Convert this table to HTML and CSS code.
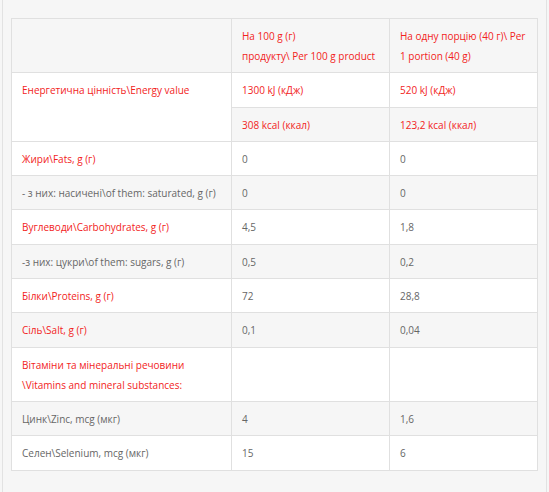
FILE: index.html
```html
<!DOCTYPE html>
<html lang="uk">
<head>
<meta charset="utf-8">
<title>Nutrition</title>
<link rel="stylesheet" href="styles.css">
</head>
<body>
<div class="panel">
  <table class="nutri">
    <colgroup>
      <col class="c1"><col class="c2"><col class="c3">
    </colgroup>
    <tr class="alt">
      <td></td>
      <td class="red">На 100 g (г)<br>продукту\ Per 100 g product</td>
      <td class="red">На одну порцію (40 г)\ Per 1 portion (40 g)</td>
    </tr>
    <tr>
      <td class="red first" rowspan="2">Енергетична цінність\Energy value</td>
      <td class="red">1300 kJ (кДж)</td>
      <td class="red">520 kJ (кДж)</td>
    </tr>
    <tr class="alt">
      <td class="red">308 kcal (ккал)</td>
      <td class="red">123,2 kcal (ккал)</td>
    </tr>
    <tr>
      <td class="red">Жири\Fats, g (г)</td><td>0</td><td>0</td>
    </tr>
    <tr class="alt">
      <td>- з них: насичені\of them: saturated, g (г)</td><td>0</td><td>0</td>
    </tr>
    <tr>
      <td class="red">Вуглеводи\Carbohydrates, g (г)</td><td>4,5</td><td>1,8</td>
    </tr>
    <tr class="alt">
      <td>-з них: цукри\of them: sugars, g (г)</td><td>0,5</td><td>0,2</td>
    </tr>
    <tr>
      <td class="red">Білки\Proteins, g (г)</td><td>72</td><td>28,8</td>
    </tr>
    <tr class="alt">
      <td class="red">Сіль\Salt, g (г)</td><td>0,1</td><td>0,04</td>
    </tr>
    <tr>
      <td class="red">Вітаміни та мінеральні речовини<br>\Vitamins and mineral substances:</td><td></td><td></td>
    </tr>
    <tr class="alt">
      <td>Цинк\Zinc, mcg (мкг)</td><td>4</td><td>1,6</td>
    </tr>
    <tr>
      <td>Селен\Selenium, mcg (мкг)</td><td>15</td><td>6</td>
    </tr>
  </table>
</div>
</body>
</html>
```

FILE: styles.css
```css
html, body {
  margin: 0;
  padding: 0;
  background: #f6f6f6;
}
body {
  font-family: "Open Sans", "Liberation Sans", sans-serif;
  font-size: 10px;
  color: #666;
}
.panel {
  margin-left: 2px;
  width: 545px;
  box-sizing: border-box;
  border-left: 1px solid #e2e2e2;
  border-right: 1px solid #e2e2e2;
  background: #f6f6f6;
  padding: 18px 10px 21px 8px;
  min-height: 492px;
}
.nutri {
  border-collapse: collapse;
  width: 526px;
  table-layout: fixed;
  background: #fff;
}
.c1 { width: 220px; }
.c2 { width: 158px; }
.c3 { width: 148px; }
.nutri td {
  border: 1px solid #e0e0e0;
  padding: 7px 10px 6.3px 10px;
  line-height: 20px;
  vertical-align: top;
  text-align: left;
}
.nutri tr.alt td {
  background: #f6f6f6;
}
.nutri td.first,
.nutri tr.alt td.first {
  background: #fff;
}
.red {
  color: #f2231c;
}
```
